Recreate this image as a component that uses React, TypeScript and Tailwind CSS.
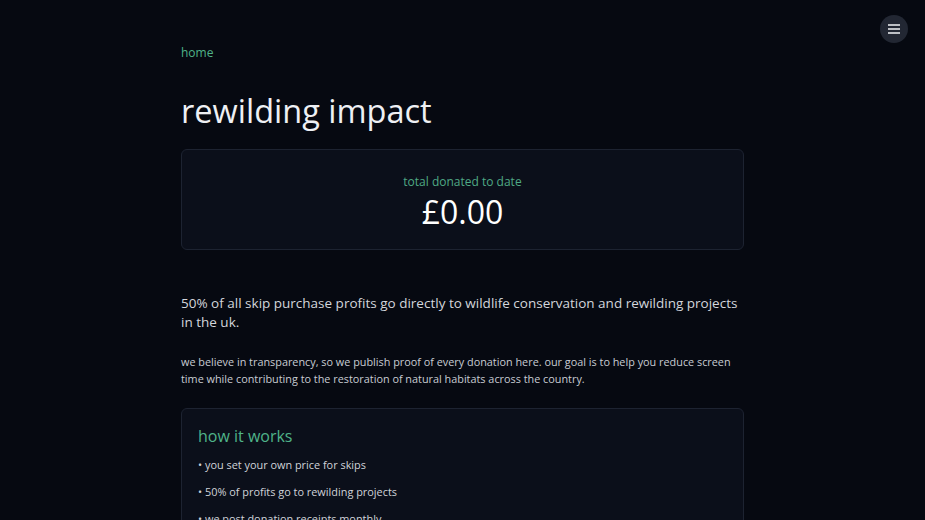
const STEPS = [
  'you set your own price for skips',
  '50% of profits go to rewilding projects',
  'we post donation receipts monthly',
];

export default function App() {
  return (
    <div
      className="relative min-h-screen bg-[#060911] text-gray-100"
      style={{ fontFamily: '"Open Sans", "Noto Sans", sans-serif' }}
    >
      <button
        className="absolute right-[17px] top-[15px] flex h-[28px] w-[28px] items-center justify-center rounded-full bg-[#222733]"
        aria-label="menu"
      >
        <svg width="12" height="10" viewBox="0 0 12 10" fill="none">
          <path d="M0 1h12M0 5h12M0 9h12" stroke="#f1f3f6" strokeWidth="1.6" />
        </svg>
      </button>

      <main className="mx-auto w-[563px] pt-[45px] pb-10">
        <a className="block text-[12px] leading-4 text-[#4fb389]">home</a>

        <h1 className="mt-[30px] text-[32.5px] leading-[40px] font-normal text-[#eef0f4]">rewilding impact</h1>

        <div className="mt-[18px] flex flex-col items-center rounded-md border border-[#1d2331] bg-[#0b0f1a] pt-[24px] pb-[19px]">
          <p className="text-[12px] leading-4 text-[#4fa985]">total donated to date</p>
          <p className="mt-[4px] text-[32px] leading-[36px] text-white">£0.00</p>
        </div>

        <p className="mt-[44px] text-[13.5px] leading-[19px] text-[#d3d6dc]">
          50% of all skip purchase profits go directly to wildlife conservation and rewilding projects in the uk.
        </p>

        <p className="mt-[21px] text-[10.85px] leading-[17px] text-[#c8ccd3]">
          we believe in transparency, so we publish proof of every donation here. our goal is to help you reduce screen
          time while contributing to the restoration of natural habitats across the country.
        </p>

        <div className="mt-[21px] rounded-md border border-[#1d2331] bg-[#0b0f1a] px-[16px] pt-[15px] pb-[16px]">
          <h2 className="text-[16px] leading-6 text-[#4fb389]">how it works</h2>
          <ul className="mt-[8px] flex flex-col gap-[10px] text-[10.9px] leading-[17px] text-[#d0d3d9]">
            {STEPS.map((s) => (
              <li key={s}>• {s}</li>
            ))}
          </ul>
        </div>
      </main>
    </div>
  );
}
